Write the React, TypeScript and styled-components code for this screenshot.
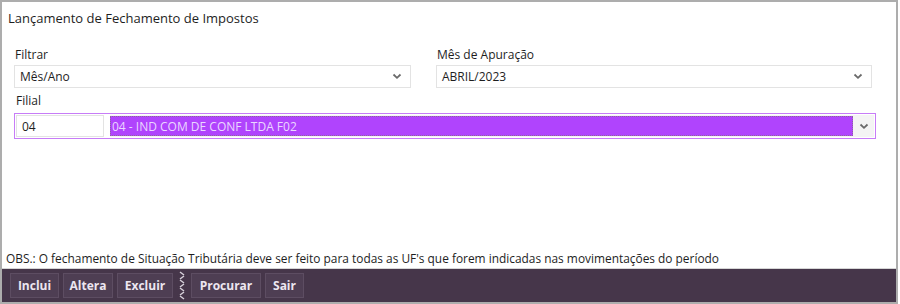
import React from 'react'
import styled, { createGlobalStyle } from 'styled-components'

const GlobalStyle = createGlobalStyle`
  html, body {
    margin: 0;
    padding: 0;
    background: #ffffff;
  }
  body {
    font-family: 'Open Sans', 'DejaVu Sans', sans-serif;
    font-size: 12px;
    color: #1e1e1e;
  }
`

const Window = styled.div`
  width: 898px;
  height: 304px;
  box-sizing: border-box;
  border: 2px solid #adadad;
  display: flex;
  flex-direction: column;
  background: #ffffff;
`

const Title = styled.div`
  height: 31px;
  padding: 0 6px;
  display: flex;
  align-items: center;
  font-size: 13px;
`

const Form = styled.div`
  padding: 11px 12px 0 12px;
  display: grid;
  grid-template-columns: 397px 436px;
  column-gap: 25px;
`

const Field = styled.div`
  display: flex;
  flex-direction: column;
`

const Label = styled.div`
  height: 21px;
  line-height: 21px;
  padding-left: 1px;
`

const SelectBox = styled.div`
  height: 23px;
  box-sizing: border-box;
  border: 1px solid #e3e3e3;
  display: flex;
  align-items: center;
  justify-content: space-between;
  padding: 0 8px 0 5px;
  background: #ffffff;
`

const Chevron = ({ color = '#6a6a6a' }: { color?: string }) => (
  <svg width='10' height='7' viewBox='0 0 10 7'>
    <path d='M1.5 1.5 L5 4.8 L8.5 1.5' fill='none' stroke={color} strokeWidth='1.8' />
  </svg>
)

const FilialLabel = styled.div`
  grid-column: 1 / span 2;
  padding: 3px 0 0 2px;
  height: 25px;
  line-height: 20px;
  box-sizing: border-box;
`

const FilialRow = styled.div`
  grid-column: 1 / span 2;
  height: 26px;
  box-sizing: border-box;
  border: 1px solid #c77cf7;
  padding: 1px;
  display: flex;
  gap: 6px;
  margin-right: -4px;
`

const CodeInput = styled.div`
  width: 88px;
  box-sizing: border-box;
  border: 1px solid #e3e3e3;
  display: flex;
  align-items: center;
  padding-left: 5px;
`

const PurpleSelect = styled.div`
  flex: 1;
  display: flex;
  background: #f4f4f4;
`

const Highlight = styled.div`
  flex: 1;
  background: #b044fd;
  outline: 1px dotted #8c6a9a;
  outline-offset: -1px;
  color: #ead7ff;
  display: flex;
  align-items: center;
  padding-left: 2px;
  margin: 1px 0;
`

const DropButton = styled.div`
  width: 21px;
  display: flex;
  align-items: center;
  justify-content: center;
`

const Spacer = styled.div`
  flex: 1;
`

const Obs = styled.div`
  height: 20px;
  line-height: 20px;
  padding-left: 4px;
  font-size: 11.9px;
  border-bottom: 1px solid #d6d6d6;
`

const Toolbar = styled.div`
  height: 33px;
  background: #46364a;
  display: flex;
  align-items: center;
  padding-left: 8px;
  gap: 4px;
`

const ToolButton = styled.div<{ $w: number }>`
  width: ${p => p.$w}px;
  height: 25px;
  box-sizing: border-box;
  border: 1px solid #5d4d62;
  background: #4e3e53;
  color: #ece6f0;
  font-weight: 700;
  font-size: 12px;
  display: flex;
  align-items: center;
  justify-content: center;
`

const Separator = styled.div`
  width: 10px;
  height: 30px;
  display: flex;
  align-items: center;
  justify-content: center;
`

const Zigzag = () => (
  <svg width='6' height='30' viewBox='0 0 6 30'>
    {[0, 1, 2, 3, 4, 5, 6].map(i => (
      <path
        key={i}
        d={i % 2 === 0 ? `M1 ${i * 4 + 1} L5 ${i * 4 + 4}` : `M5 ${i * 4 + 1} L1 ${i * 4 + 4}`}
        fill='none'
        stroke='#d8d2dc'
        strokeWidth='1.4'
      />
    ))}
  </svg>
)

export default function App() {
  return (
    <>
      <GlobalStyle />
      <Window>
        <Title>Lançamento de Fechamento de Impostos</Title>
        <Form>
          <Field>
            <Label>Filtrar</Label>
            <SelectBox>
              <span>Mês/Ano</span>
              <Chevron />
            </SelectBox>
          </Field>
          <Field>
            <Label>Mês de Apuração</Label>
            <SelectBox>
              <span>ABRIL/2023</span>
              <Chevron />
            </SelectBox>
          </Field>
          <FilialLabel>Filial</FilialLabel>
          <FilialRow>
            <CodeInput>04</CodeInput>
            <PurpleSelect>
              <Highlight>04 - IND COM DE CONF LTDA F02</Highlight>
              <DropButton>
                <Chevron />
              </DropButton>
            </PurpleSelect>
          </FilialRow>
        </Form>
        <Spacer />
        <Obs>
          OBS.: O fechamento de Situação Tributária deve ser feito para todas as UF's que forem indicadas nas
          movimentações do período
        </Obs>
        <Toolbar>
          <ToolButton $w={49}>Inclui</ToolButton>
          <ToolButton $w={50}>Altera</ToolButton>
          <ToolButton $w={56}>Excluir</ToolButton>
          <Separator>
            <Zigzag />
          </Separator>
          <ToolButton $w={70}>Procurar</ToolButton>
          <ToolButton $w={39}>Sair</ToolButton>
        </Toolbar>
      </Window>
    </>
  )
}
